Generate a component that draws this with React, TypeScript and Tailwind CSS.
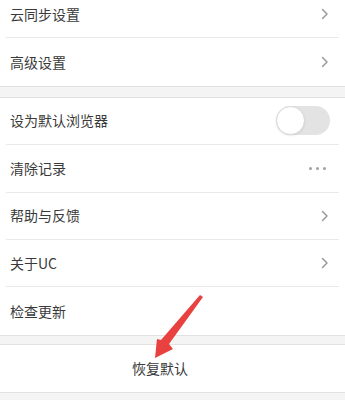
import React from 'react';

const Chevron = () => (
  <svg width="8" height="12" viewBox="0 0 8 12" className="shrink-0">
    <path d="M1.5 1.5 L6 6 L1.5 10.5" fill="none" stroke="#9a9a9a" strokeWidth="1.5" strokeLinecap="round" strokeLinejoin="round" />
  </svg>
);

const Dots = () => (
  <div className="flex items-center gap-[4px] mr-[3px]">
    <span className="w-[3px] h-[3px] rounded-full bg-[#a0a0a0]" />
    <span className="w-[3px] h-[3px] rounded-full bg-[#a0a0a0]" />
    <span className="w-[3px] h-[3px] rounded-full bg-[#a0a0a0]" />
  </div>
);

const Toggle = () => (
  <div className="w-[54px] h-[29px] rounded-full bg-[#e3e3e3] flex items-center">
    <div className="w-[29px] h-[29px] rounded-full bg-white border border-[#d8d8d8] shadow-[0_1px_2px_rgba(0,0,0,0.08)]" />
  </div>
);

const Row = ({ label, right, last }: { label: string; right?: React.ReactNode; last?: boolean }) => (
  <div className={`mx-[6px] h-[47.4px] flex items-center justify-between pl-[4px] pr-[10px] ${last ? '' : 'border-b border-[#e9e9e9]'}`}>
    <span className="text-[14px] text-[#3a3a3a]">{label}</span>
    {right}
  </div>
);

export default function App() {
  return (
    <div
      className="relative w-[345px] h-[400px] overflow-hidden bg-white"
      style={{ fontFamily: '"Noto Sans CJK SC", "Noto Sans", sans-serif' }}
    >
      <div className="-mt-[9px]">
        <Row label="云同步设置" right={<Chevron />} />
        <Row label="高级设置" right={<Chevron />} last />
      </div>
      <div className="h-[12px] bg-[#f4f4f4] border-y border-[#e2e2e2]" />
      <Row label="设为默认浏览器" right={<div className="-mr-[1px]"><Toggle /></div>} />
      <Row label="清除记录" right={<Dots />} />
      <Row label="帮助与反馈" right={<Chevron />} />
      <Row label="关于UC" right={<Chevron />} />
      <Row label="检查更新" last />
      <div className="h-[10px] bg-[#f4f4f4] border-y border-[#e2e2e2]" />
      <div className="h-[47px] flex items-center justify-center pr-[25px]">
        <span className="text-[14px] text-[#3a3a3a]">恢复默认</span>
      </div>
      <div className="h-[12px] bg-[#f4f4f4] border-t border-[#e2e2e2]" />

      <svg className="absolute left-0 top-0 pointer-events-none" width="345" height="400" viewBox="0 0 345 400">
        <polygon
          points="200,295 203,297 169,344 173,349 155,358 157,339 161,340"
          fill="#e8413f"
        />
      </svg>
    </div>
  );
}
